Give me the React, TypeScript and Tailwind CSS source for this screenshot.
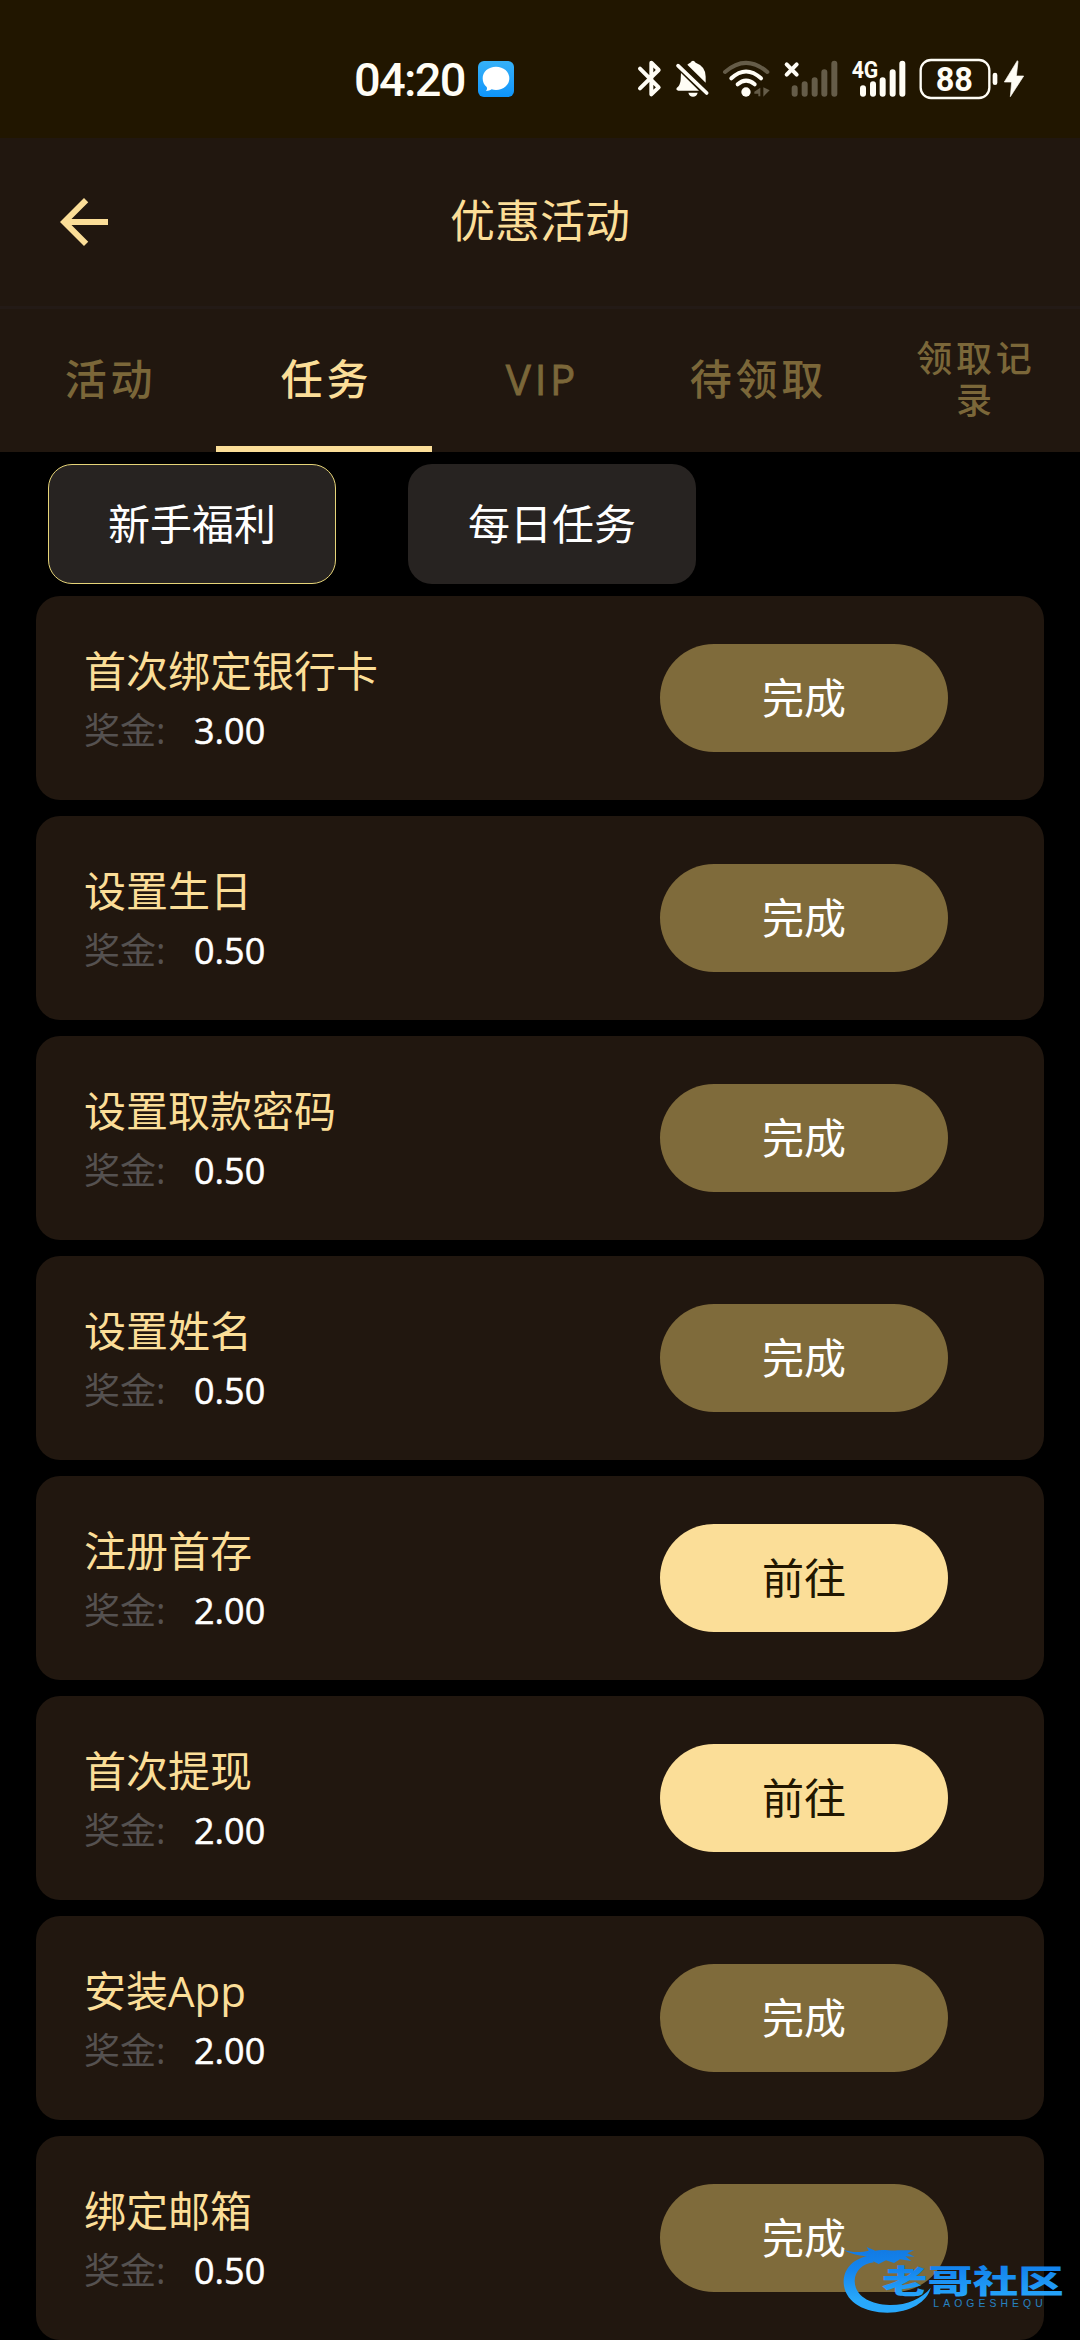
const tabs = ['活动', '任务', 'VIP', '待领取', '领取记录']

const tasks = [
  { title: '首次绑定银行卡', bonus: '3.00', done: true },
  { title: '设置生日', bonus: '0.50', done: true },
  { title: '设置取款密码', bonus: '0.50', done: true },
  { title: '设置姓名', bonus: '0.50', done: true },
  { title: '注册首存', bonus: '2.00', done: false },
  { title: '首次提现', bonus: '2.00', done: false },
  { title: '安装App', bonus: '2.00', done: true },
  { title: '绑定邮箱', bonus: '0.50', done: true },
]

function StatusBar() {
  return (
    <div className="flex h-[138px] items-start bg-[#211600] pl-[354px] pt-[58px] text-[#fffdf5]">
      {/* Clock */}
      <span className="h-[42px] w-[124px] whitespace-nowrap font-[Roboto] text-[47px] font-medium leading-[43px] tracking-[-1.7px]">
        04:20
      </span>

      {/* Message app */}
      <div className="mt-[3px] flex h-9 w-9 items-center justify-center rounded-md bg-gradient-to-b from-[#35b1f8] to-[#0d95fb]">
        <svg className="h-9 w-9" viewBox="0 0 108 108" fill="#fff">
          <path d="M54 17c23 0 40 15 40 35S77 87 54 87c-5 0-9-1-13-2-5 4-11 5-17 5 3-4 4-8 2-12-8-6-12-15-12-26 0-20 17-35 40-35z" />
        </svg>
      </div>

      {/* Bluetooth */}
      <svg className="ml-[122px] h-[42px] w-[28px]" viewBox="49 55 84 126" fill="none" stroke="currentColor" strokeWidth="12" strokeLinecap="round" strokeLinejoin="round">
        <path d="M61 87L117 143L95 164V69L117 91L61 146" />
      </svg>

      {/* Muted bell */}
      <svg className="ml-[10px] h-[42px] w-[36px]" viewBox="163 55 108 126" fill="currentColor">
        <path d="M184 100L238 153H176q-8-1-5-8 11-9 12-24z" />
        <path d="M203 75q5-4 9-6 8-11 16 0 30 11 30 42v18z" />
        <path d="M206 159h28q-3 12-14 12t-14-12z" />
        <path d="M175 78L261 160" stroke="currentColor" strokeWidth="11" strokeLinecap="round" />
      </svg>

      {/* Wifi */}
      <svg className="ml-[12px] h-[42px] w-[48px]" viewBox="307 55 144 126" fill="none" stroke="currentColor" strokeWidth="12" strokeLinecap="round">
        <path d="M316 97Q379 42 443 97" stroke="#655c48" />
        <path d="M335 116Q379 75 424 116" />
        <path d="M354 134Q379 112 405 134" />
        <circle cx="379" cy="157" r="14" fill="currentColor" stroke="none" />
        <path d="M422 144V170H416V162H404V156zM431 143L450 152L438 164L431 171z" fill="#655c48" stroke="none" />
      </svg>

      {/* Empty sim */}
      <svg className="ml-[13px] h-[42px] w-[56px]" viewBox="490 55 168 126" fill="none" strokeLinecap="round">
        <path d="M501 74L531 105M531 74L501 105" stroke="currentColor" strokeWidth="12" />
        <path d="M525 146V162M555 134V162M585 122V162M614 98V162M644 72V162" stroke="#655c48" strokeWidth="18" />
      </svg>

      {/* 4G signal */}
      <svg className="ml-[12px] h-[42px] w-[56px] overflow-visible" viewBox="694 55 168 126" fill="none" strokeLinecap="round">
        <text x="696" y="116" textLength="80" lengthAdjust="spacingAndGlyphs" fill="currentColor" className="font-[Roboto] text-[70px] font-bold">4G</text>
        <path d="M730 146V162M760 134V162M789 122V162M819 98V162M848 72V162" stroke="currentColor" strokeWidth="18" />
      </svg>

      {/* Battery */}
      <svg className="ml-[12px] h-[42px] w-[80px]" viewBox="898 55 240 126" fill="none">
        <rect x="903" y="61" width="206" height="114" rx="31" stroke="currentColor" strokeWidth="7" />
        <text x="948" y="153" textLength="112" lengthAdjust="spacingAndGlyphs" fill="currentColor" className="font-[Roboto] text-[100px] font-bold">88</text>
        <rect x="1119" y="99" width="14" height="37" rx="7" fill="currentColor" />
      </svg>
      <svg className="ml-[4px] h-[42px] w-[22px]" viewBox="1150 55 66 126" fill="currentColor">
        <path d="M1193 63L1154 127H1176L1172 171L1212 109H1190L1195 66z" stroke="currentColor" strokeWidth="2" strokeLinejoin="round" />
      </svg>
    </div>
  )
}

function Header() {
  return (
    <header className="grid h-[168px] grid-cols-[1fr_auto_1fr] items-center px-12">
      <svg className="h-[72px] w-[72px]" viewBox="0 0 24 24" fill="currentColor">
        <path d="M20 11H7.83l5.59-5.59L12 4l-8 8 8 8 1.41-1.41L7.83 13H20v-2z" />
      </svg>
      <h1 className="pb-[3px] text-[45px] leading-none">优惠活动</h1>
    </header>
  )
}

function Tabs() {
  return (
    <nav className="grid h-[146px] grid-cols-5 border-t-[3px] border-[#231a16] font-medium tracking-[3.75px]">
      {tabs.map((tab, i) => (
        <div
          key={tab}
          className={`flex items-center justify-center border-b-[6px] text-center ${
            i === 1 ? 'border-[#fbde98]' : 'border-transparent text-[#7b6739]'
          } ${tab === 'VIP' ? '[-webkit-text-stroke:0.8px]' : ''} ${
            tab.length > 3 ? 'pl-[40px] pr-8 pt-[5px] text-[36px] leading-[42px]' : 'pl-[5px] pt-[3px] text-[42px] leading-none'
          }`}
        >
          {tab}
        </div>
      ))}
    </nav>
  )
}

function TaskCard({ title, bonus, done }: { title: string; bonus: string; done: boolean }) {
  return (
    <div className="flex h-[204px] items-center justify-between rounded-3xl bg-[#21170f] pl-12 pr-24">
      <div className="pt-[5px]">
        <div className="text-[42px] leading-[60px] text-[#fbde98]">{title}</div>
        <div className="flex h-[60px] items-center text-[36px] leading-[60px]">
          <span className="w-[110px] text-[#555150]">奖金:</span>
          <span className="text-white [-webkit-text-stroke:0.5px]">{bonus}</span>
        </div>
      </div>
      <button
        className={`h-[108px] w-[288px] rounded-full text-[42px] leading-none ${
          done ? 'bg-[#7f6b3b] text-white' : 'bg-[#fbde98] text-[#211600]'
        }`}
      >
        {done ? '完成' : '前往'}
      </button>
    </div>
  )
}

function Watermark() {
  return (
    <svg className="absolute bottom-[23px] right-[13px] h-[74px] w-[227px]" viewBox="120 70 681 222">
      <defs>
        <linearGradient id="blue" gradientUnits="userSpaceOnUse" x1="0" y1="80" x2="0" y2="280">
          <stop offset="0" stopColor="#1279e2" />
          <stop offset="0.35" stopColor="#1485ee" />
          <stop offset="0.8" stopColor="#28a8fb" />
        </linearGradient>
      </defs>
      <g fill="url(#blue)">
        <path d="M205 108C150 120 130 155 131 190C134 245 190 279 262 279C330 279 383 245 392 204C365 238 320 257 268 256C205 254 164 225 164 184C164 154 188 132 222 128z" />
        <path d="M130 90C155 99 185 98 206 93L200 82L226 93C250 88 275 95 292 92L342 92L322 101L344 111L316 110L334 124L300 119L282 130L258 122L236 133L218 124L195 125L208 111C180 108 150 103 130 90z" />
        <text x="246" y="220" textLength="545" lengthAdjust="spacingAndGlyphs" className="text-[96px] font-black">
          老哥社区
        </text>
        <text x="400" y="261" textLength="328" opacity="0.75" className="font-[Liberation_Sans] text-[31px]">
          LAOGESHEQU
        </text>
      </g>
    </svg>
  )
}

export default function App() {
  return (
    <main className="relative h-[2340px] w-[1080px] overflow-hidden bg-black font-['Open_Sans','Noto_Sans_CJK_SC',sans-serif]">
      <StatusBar />
      <div className="bg-[#21170f] text-[#fbde98]">
        <Header />
        <Tabs />
      </div>

      {/* Task categories */}
      <div className="flex gap-[72px] px-12 py-3 text-[42px] leading-none text-white">
        <button className="h-[120px] w-[288px] rounded-3xl border border-[#e6d478] bg-[#272321]">新手福利</button>
        <button className="h-[120px] w-[288px] rounded-3xl bg-[#272321]">每日任务</button>
      </div>

      {/* Task list */}
      <div className="flex flex-col gap-4 px-9">
        {tasks.map((task) => (
          <TaskCard key={task.title} {...task} />
        ))}
      </div>

      <Watermark />
    </main>
  )
}
